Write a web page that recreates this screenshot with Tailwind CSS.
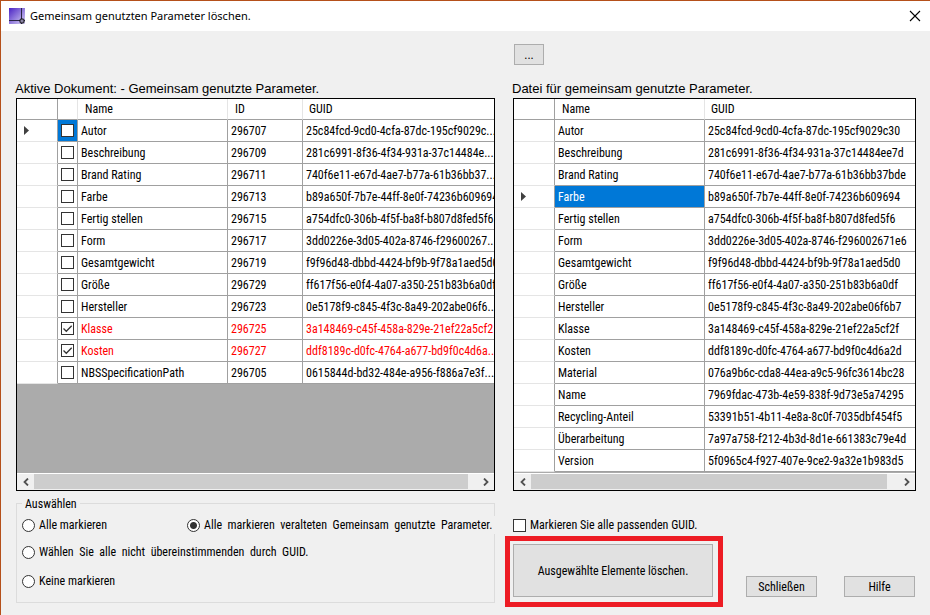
<!DOCTYPE html>
<html lang="de">
<head>
<meta charset="utf-8">
<meta name="viewport" content="width=device-width, initial-scale=1">
<title>Gemeinsam genutzten Parameter löschen.</title>
<script src="https://cdn.jsdelivr.net/npm/@tailwindcss/browser@4"></script>
</head>
<body class="flex min-h-screen flex-col border-t border-l border-[#b5501a] bg-[#f0f0f0] font-['Roboto_Condensed','Liberation_Sans',sans-serif] text-[12px] leading-[16px] text-black">

<header class="flex h-[30px] items-center justify-between bg-white pr-[9px] pl-2">
  <div class="flex items-center gap-[5px]">
    <svg class="size-4" viewBox="0 0 16 16" aria-hidden="true">
      <defs><linearGradient id="g" x1="0" y1="0" x2="1" y2="1"><stop offset="0" stop-color="#4a22c4"/><stop offset="1" stop-color="#d9d2f5"/></linearGradient></defs>
      <rect width="16" height="16" fill="url(#g)"/>
      <path d="M0 12.5H16M12.5 0V16" stroke="#2b2645" fill="none"/>
      <rect x="11" y="11" width="4" height="4" rx="1" fill="#8d86a8" stroke="#111"/>
    </svg>
    <h1 class="font-['Noto_Sans','Open_Sans',sans-serif] text-[11px]">Gemeinsam genutzten Parameter löschen.</h1>
  </div>
  <button type="button" aria-label="Fenster schließen" class="size-3">
    <svg viewBox="0 0 12 12" class="size-3"><path d="M1 1L11 11M11 1L1 11" stroke="#000" stroke-width="1.1" fill="none"/></svg>
  </button>
</header>

<main class="grid grow grid-cols-[479fr_403fr] gap-x-[18px] pt-[13px] pr-[14px] pl-[15px]">
  <section class="flex min-w-0 flex-col">
    <h2 class="mt-[35px] font-['Liberation_Sans',sans-serif] text-[13px] leading-[19px] -ml-px">Aktive Dokument: - Gemeinsam genutzte Parameter.</h2>
    <div class="flex h-[393px] flex-col border border-black bg-[#ababab]">
      <div class="grow overflow-hidden">
        <table class="w-full table-fixed border-separate border-spacing-0 bg-white text-left">
          <colgroup><col class="w-[41px]"><col class="w-5"><col class="w-[150px]"><col class="w-[75px]"><col></colgroup>
          <thead>
            <tr class="h-[21px] [&>th]:border-b [&>th]:border-b-[#a0a0a0] [&>th]:p-0 [&>th]:font-normal">
              <th class="border-r border-r-[#a0a0a0]"></th><th class="border-r border-r-[#e5e5e5]"></th>
              <th class="border-r border-r-[#e5e5e5]"><span class="pl-[7px]">Name</span></th>
              <th class="border-r border-r-[#e5e5e5]"><span class="pl-[7px]">ID</span></th>
              <th><span class="pl-[6px]">GUID</span></th>
            </tr>
          </thead>
          <tbody id="left"></tbody>
        </table>
      </div>
      <div class="flex h-[17px] shrink-0 border-t border-b border-t-white border-b-[#f0f0f0] bg-[#f0f0f0]">
        <button type="button" aria-label="Nach links" class="flex w-[17px] items-center justify-center"><svg class="h-2 w-[6px]" viewBox="0 0 6 8"><path d="M5 .5L1.5 4L5 7.5" fill="none" stroke="#505050" stroke-width="1.8"/></svg></button>
        <div class="grow"><div class="h-full w-[98%] bg-[#cdcdcd]"></div></div>
        <button type="button" aria-label="Nach rechts" class="flex w-[17px] items-center justify-center"><svg class="h-2 w-[6px]" viewBox="0 0 6 8"><path d="M1 .5L4.5 4L1 7.5" fill="none" stroke="#505050" stroke-width="1.8"/></svg></button>
      </div>
    </div>

    <fieldset class="relative mt-[12px] h-[100px] border border-[#dcdcdc]">
      <legend class="absolute -top-[7px] left-[5px] bg-[#f0f0f0] px-[3px] leading-[14px]">Auswählen</legend>
      <div class="grid grid-cols-[165px_1fr] pt-[12px] pl-[5px]">
        <label class="flex h-[18px] items-center gap-1"><input type="radio" name="sel" class="size-[13px] appearance-none rounded-full border border-[#333] bg-white">Alle markieren</label>
        <label class="-mr-px flex h-[18px] items-center gap-1 bg-[#f0f0f0] whitespace-pre"><input type="radio" name="sel" checked class="size-[13px] appearance-none rounded-full border border-[#333] bg-[radial-gradient(circle,#333_0_3px,#fff_4px)]">Alle  markieren  veralteten  Gemeinsam  genutzte  Parameter.</label>
        <label class="col-span-2 mt-[9px] flex h-[18px] items-center gap-1 whitespace-pre"><input type="radio" name="sel" class="size-[13px] appearance-none rounded-full border border-[#333] bg-white">Wählen  Sie  alle  nicht  übereinstimmenden  durch  GUID.</label>
        <label class="col-span-2 mt-[11px] flex h-[18px] items-center gap-1"><input type="radio" name="sel" class="size-[13px] appearance-none rounded-full border border-[#333] bg-white">Keine markieren</label>
      </div>
    </fieldset>
  </section>

  <section class="flex min-w-0 flex-col">
    <button type="button" class="ml-px h-[21px] w-[30px] border border-[#adadad] bg-[#e1e1e1]">...</button>
    <h2 class="mt-[14px] font-['Liberation_Sans',sans-serif] text-[13px] leading-[19px] -ml-px">Datei für gemeinsam genutzte Parameter.</h2>
    <div class="flex h-[393px] flex-col border border-black bg-[#ababab]">
      <div class="grow overflow-hidden">
        <table class="w-full table-fixed border-separate border-spacing-0 bg-white text-left">
          <colgroup><col class="w-[41px]"><col class="w-[150px]"><col></colgroup>
          <thead>
            <tr class="h-[21px] [&>th]:border-b [&>th]:border-b-[#a0a0a0] [&>th]:p-0 [&>th]:font-normal">
              <th class="border-r border-r-[#a0a0a0]"></th>
              <th class="border-r border-r-[#e5e5e5]"><span class="pl-[7px]">Name</span></th>
              <th><span class="pl-[6px]">GUID</span></th>
            </tr>
          </thead>
          <tbody id="right"></tbody>
        </table>
      </div>
      <div class="flex h-[17px] shrink-0 border-t border-b border-t-white border-b-[#f0f0f0] bg-[#f0f0f0]">
        <button type="button" aria-label="Nach links" class="flex w-[17px] items-center justify-center"><svg class="h-2 w-[6px]" viewBox="0 0 6 8"><path d="M5 .5L1.5 4L5 7.5" fill="none" stroke="#505050" stroke-width="1.8"/></svg></button>
        <div class="grow"><div class="h-full w-[97%] bg-[#cdcdcd]"></div></div>
        <button type="button" aria-label="Nach rechts" class="flex w-[17px] items-center justify-center"><svg class="h-2 w-[6px]" viewBox="0 0 6 8"><path d="M1 .5L4.5 4L1 7.5" fill="none" stroke="#505050" stroke-width="1.8"/></svg></button>
      </div>
    </div>

    <label class="mt-[25px] flex h-[18px] items-center gap-1"><input type="checkbox" class="size-[13px] appearance-none border border-[#333] bg-white">Markieren Sie alle passenden GUID.</label>
    <div class="mt-[2px] flex items-end justify-between">
      <div class="-ml-2 border-5 border-[#ed1c24] p-[3px] pr-[5px] pb-[5px]">
        <button type="button" class="h-[53px] w-[200px] border border-[#adadad] bg-[#e1e1e1]">Ausgewählte Elemente löschen.</button>
      </div>
      <div class="mb-[10px] flex gap-[27px] pr-px">
        <button type="button" class="h-[21px] w-[71px] border border-[#adadad] bg-[#e1e1e1]">Schließen</button>
        <button type="button" class="h-[21px] w-[71px] border border-[#adadad] bg-[#e1e1e1]">Hilfe</button>
      </div>
    </div>
  </section>
</main>

<script>
const left = [
  ['Autor','296707','25c84fcd-9cd0-4cfa-87dc-195cf9029c...'],
  ['Beschreibung','296709','281c6991-8f36-4f34-931a-37c14484e...'],
  ['Brand Rating','296711','740f6e11-e67d-4ae7-b77a-61b36bb37...'],
  ['Farbe','296713','b89a650f-7b7e-44ff-8e0f-74236b609694'],
  ['Fertig stellen','296715','a754dfc0-306b-4f5f-ba8f-b807d8fed5f6'],
  ['Form','296717','3dd0226e-3d05-402a-8746-f29600267...'],
  ['Gesamtgewicht','296719','f9f96d48-dbbd-4424-bf9b-9f78a1aed5d0'],
  ['Größe','296729','ff617f56-e0f4-4a07-a350-251b83b6a0df'],
  ['Hersteller','296723','0e5178f9-c845-4f3c-8a49-202abe06f6...'],
  ['Klasse','296725','3a148469-c45f-458a-829e-21ef22a5cf2'],
  ['Kosten','296727','ddf8189c-d0fc-4764-a677-bd9f0c4d6a...'],
  ['NBSSpecificationPath','296705','0615844d-bd32-484e-a956-f886a7e3f...']
];
const right = [
  ['Autor','25c84fcd-9cd0-4cfa-87dc-195cf9029c30'],
  ['Beschreibung','281c6991-8f36-4f34-931a-37c14484ee7d'],
  ['Brand Rating','740f6e11-e67d-4ae7-b77a-61b36bb37bde'],
  ['Farbe','b89a650f-7b7e-44ff-8e0f-74236b609694'],
  ['Fertig stellen','a754dfc0-306b-4f5f-ba8f-b807d8fed5f6'],
  ['Form','3dd0226e-3d05-402a-8746-f296002671e6'],
  ['Gesamtgewicht','f9f96d48-dbbd-4424-bf9b-9f78a1aed5d0'],
  ['Größe','ff617f56-e0f4-4a07-a350-251b83b6a0df'],
  ['Hersteller','0e5178f9-c845-4f3c-8a49-202abe06f6b7'],
  ['Klasse','3a148469-c45f-458a-829e-21ef22a5cf2f'],
  ['Kosten','ddf8189c-d0fc-4764-a677-bd9f0c4d6a2d'],
  ['Material','076a9b6c-cda8-44ea-a9c5-96fc3614bc28'],
  ['Name','7969fdac-473b-4e59-838f-9d73e5a74295'],
  ['Recycling-Anteil','53391b51-4b11-4e8a-8c0f-7035dbf454f5'],
  ['Überarbeitung','7a97a758-f212-4b3d-8d1e-661383c79e4d'],
  ['Version','5f0965c4-f927-407e-9ce2-9a32e1b983d5']
];
const marker = on => `<td class="border-r border-b border-r-[#a0a0a0] border-b-[#e5e5e5] p-0">${on ? '<svg class="ml-[7px] h-[9px] w-[5px]" viewBox="0 0 5 9"><path d="M0 0L5 4.5L0 9Z" fill="#404040"/></svg>' : ''}</td>`;
const cell = 'overflow-hidden border-r border-b border-[#a0a0a0] p-0 pl-[3px] whitespace-nowrap';
const last = 'overflow-hidden border-b border-[#a0a0a0] p-0 pl-[3px] whitespace-nowrap';
const tick = '<svg class="pointer-events-none col-start-1 row-start-1 size-[13px]" viewBox="0 0 13 13"><path d="M2.5 6.5L5.3 9.3L10.7 3.8" fill="none" stroke="#333" stroke-width="1.3"/></svg>';
document.getElementById('left').innerHTML = left.map(([n, id, g], i) => {
  const on = n === 'Klasse' || n === 'Kosten';
  return `<tr class="h-[22px] ${on ? 'text-[#ff0000]' : ''}">${marker(i === 0)}
    <td class="border-r border-b border-[#a0a0a0] p-0 ${i === 0 ? 'bg-[#0078d7]' : ''}"><span class="grid place-items-center"><input type="checkbox" aria-label="${n}" ${on ? 'checked' : ''} class="col-start-1 row-start-1 size-[13px] appearance-none border border-[#333] bg-white">${on ? tick : ''}</span></td>
    <td class="${cell}">${n}</td><td class="${cell}">${id}</td><td class="${last}">${g}</td></tr>`;
}).join('');
document.getElementById('right').innerHTML = right.map(([n, g], i) =>
  `<tr class="h-[22px]">${marker(i === 3)}<td class="${cell} ${i === 3 ? 'bg-[#0078d7] text-white' : ''}">${n}</td><td class="${last}">${g}</td></tr>`
).join('');
</script>
</body>
</html>
